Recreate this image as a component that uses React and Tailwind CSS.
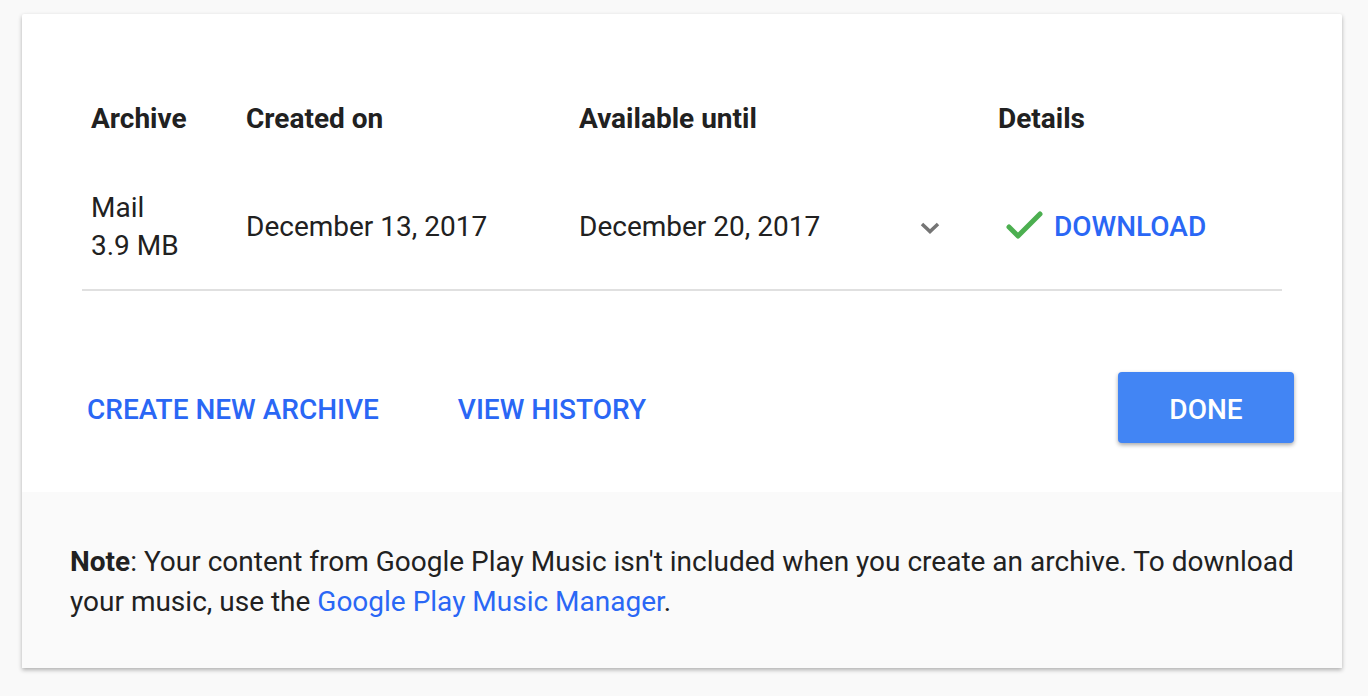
export default function App() {
  return (
    <div className="min-h-screen bg-[#f9f9f9] pt-[14px] px-[22px] font-['Roboto',sans-serif] text-[#212121]">
      <div className="w-[1320px] bg-white rounded-t-[2px] shadow-[0_2px_4px_rgba(0,0,0,0.3)] overflow-hidden">
        <div className="h-[478px] pt-[66px]">
          <div className="ml-[60px] w-[1200px]">
            <div className="flex items-center h-[78px] text-[28px] font-bold">
              <div className="w-[164px] pl-[9px]">Archive</div>
              <div className="w-[333px]">Created on</div>
              <div className="w-[419px]">Available until</div>
              <div>Details</div>
            </div>
            <div className="flex items-center h-[133px] pt-[6px] border-b-2 border-[#e0e0e0] text-[28px]">
              <div className="w-[164px] pl-[9px] leading-[38px]">
                <div>Mail</div>
                <div>3.9 MB</div>
              </div>
              <div className="w-[333px]">December 13, 2017</div>
              <div className="w-[341px]">December 20, 2017</div>
              <div className="w-[78px]">
                <svg width="20" height="12" viewBox="0 0 20 12" className="mt-[2px]">
                  <path d="M2 2 L10 9.5 L18 2" stroke="#757575" strokeWidth="3.5" fill="none" />
                </svg>
              </div>
              <div className="flex items-center gap-[10px] pl-[8px]">
                <svg width="38" height="30" viewBox="0 0 38 30" className="-mt-[4px]">
                  <path d="M3 17 L12 26 L34 4" stroke="#4caf50" strokeWidth="5" fill="none" strokeLinecap="round" strokeLinejoin="round" />
                </svg>
                <span className="text-[#2a67f5] font-medium uppercase">Download</span>
              </div>
            </div>
          </div>
          <div className="flex items-center mt-[81px] pl-[65px] pr-[48px]">
            <button className="pt-[4px] text-[28px] font-medium text-[#2a67f5] uppercase">Create new archive</button>
            <button className="ml-[79px] pt-[4px] text-[28px] font-medium text-[#2a67f5] uppercase">View history</button>
            <button className="ml-auto w-[176px] h-[71px] pt-[4px] rounded-[4px] bg-[#4285f4] text-white text-[28px] font-medium uppercase shadow-[0_2px_4px_rgba(0,0,0,0.35)]">
              Done
            </button>
          </div>
        </div>
        <div className="h-[176px] bg-[#fafafa] pl-[48px] pr-[20px] pt-[50px] text-[28px] leading-[40px]">
          <p>
            <span className="font-bold">Note</span>: Your content from Google Play Music isn't included when you create an archive. To download your music, use the{' '}
            <a className="text-[#2a67f5]">Google Play Music Manager</a>.
          </p>
        </div>
      </div>
    </div>
  )
}
